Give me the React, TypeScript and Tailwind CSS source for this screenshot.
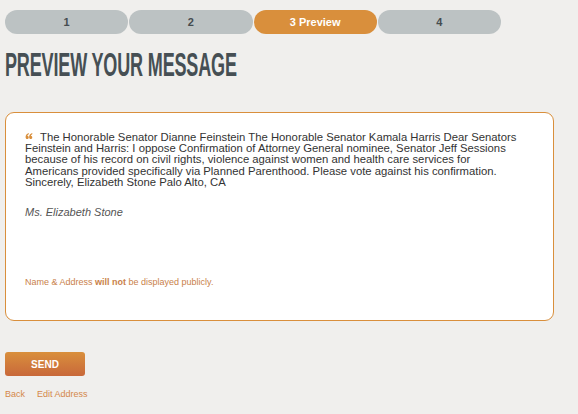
import React from 'react';

const steps = [
  { label: '1', active: false },
  { label: '2', active: false },
  { label: '3 Preview', active: true },
  { label: '4', active: false },
];

const message =
  'The Honorable Senator Dianne Feinstein The Honorable Senator Kamala Harris Dear Senators Feinstein and Harris: I oppose Confirmation of Attorney General nominee, Senator Jeff Sessions because of his record on civil rights, violence against women and health care services for Americans provided specifically via Planned Parenthood. Please vote against his confirmation. Sincerely, Elizabeth Stone Palo Alto, CA';

const QuoteMark = () => (
  <svg width="8" height="6" viewBox="0 0 8 7" className="inline-block mr-[7px] align-baseline relative top-[-2px]">
    <path d="M3.6 0 C1.4 0.8 0 2.4 0 4.6 C0 6 0.7 7 1.9 7 C3 7 3.7 6.3 3.7 5.2 C3.7 4.2 3 3.6 2 3.6 C2.2 2.5 2.8 1.7 3.9 1.1 Z" fill="#d98f3c" />
    <path d="M7.7 0 C5.5 0.8 4.1 2.4 4.1 4.6 C4.1 6 4.8 7 6 7 C7.1 7 7.8 6.3 7.8 5.2 C7.8 4.2 7.1 3.6 6.1 3.6 C6.3 2.5 6.9 1.7 8 1.1 Z" fill="#d98f3c" />
  </svg>
);

export default function App() {
  return (
    <div className="w-[578px] h-[414px] overflow-hidden bg-[#f0efed] px-[5px] pt-[10px] font-['Liberation_Sans',Arial,sans-serif]">
      <div className="flex w-[496px] gap-px">
        {steps.map((s) => (
          <div
            key={s.label}
            className={`flex-1 h-[24px] rounded-full flex items-center justify-center text-[11px] font-bold ${
              s.active ? 'bg-[#d98f3c] text-white' : 'bg-[#bcc2c3] text-[#454c50]'
            }`}
          >
            {s.label}
          </div>
        ))}
      </div>

      <h1 className="mt-[14px] h-[32px] origin-left scale-x-[0.53] whitespace-nowrap text-[34px] leading-[32px] font-bold text-[#464f54] tracking-[-0.3px]">
        PREVIEW YOUR MESSAGE
      </h1>

      <div className="mt-[32px] w-[549px] h-[209px] rounded-[9px] border border-[#d98f3c] bg-white pl-[19px] pr-[36px] pt-[19px]">
        <p className="text-[11.3px] leading-[11.2px] text-[#333]">
          <QuoteMark />
          {message}
        </p>
        <p className="mt-[16px] text-[11px] italic text-[#555]">Ms. Elizabeth Stone</p>
        <p className="mt-[55px] text-[9px] text-[#c9814a]">
          Name &amp; Address <b>will not</b> be displayed publicly.
        </p>
      </div>

      <button className="mt-[31px] w-[80px] h-[24px] rounded-[3px] bg-gradient-to-b from-[#d98f3c] to-[#c8683a] text-white text-[10px] font-bold block">
        SEND
      </button>

      <div className="mt-[12px] flex gap-[12px] text-[9px] text-[#d4884a]">
        <a href="#">Back</a>
        <a href="#">Edit Address</a>
      </div>
    </div>
  );
}
